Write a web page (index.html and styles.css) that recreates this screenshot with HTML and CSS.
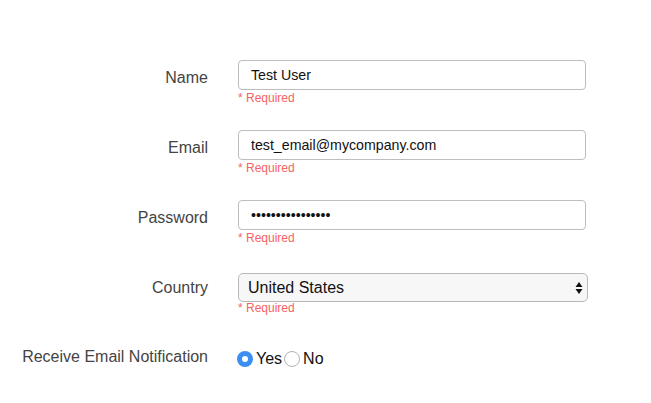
FILE: index.html
```html
<!DOCTYPE html>
<html>
<head>
<meta charset="utf-8">
<link rel="stylesheet" href="styles.css">
</head>
<body>
<form class="form">
  <div class="row">
    <label class="label">Name</label>
    <div class="control">
      <input class="input" type="text" value="Test User">
      <div class="req">* Required</div>
    </div>
  </div>
  <div class="row">
    <label class="label">Email</label>
    <div class="control">
      <input class="input" type="text" value="test_email@mycompany.com">
      <div class="req">* Required</div>
    </div>
  </div>
  <div class="row">
    <label class="label">Password</label>
    <div class="control">
      <input class="input" type="password" value="passwordpassword">
      <div class="req">* Required</div>
    </div>
  </div>
  <div class="row">
    <label class="label">Country</label>
    <div class="control">
      <div class="select">
        <span class="select-text">United States</span>
        <svg class="arrows" width="8" height="14" viewBox="0 0 8 14"><path d="M4 1 L7.5 6 L0.5 6 Z M4 13 L7.5 8 L0.5 8 Z" fill="#111"/></svg>
      </div>
      <div class="req">* Required</div>
    </div>
  </div>
  <div class="row row-radio">
    <label class="label">Receive Email Notification</label>
    <div class="control radios">
      <span class="radio on"></span><span class="rtext">Yes</span>
      <span class="radio"></span><span class="rtext">No</span>
    </div>
  </div>
</form>
</body>
</html>
```
FILE: styles.css
```css
html, body {
  margin: 0;
  padding: 0;
  background: #fff;
  font-family: "Liberation Sans", Arial, Helvetica, sans-serif;
}
.form {
  padding-top: 60px;
}
.row {
  display: grid;
  grid-template-columns: 208px 348px;
  column-gap: 30px;
  height: 70px;
}
.label {
  text-align: right;
  font-size: 16px;
  color: #444;
  line-height: 30px;
  height: 30px;
  padding-top: 3px;
}
.control {
  display: flex;
  flex-direction: column;
}
.input {
  box-sizing: border-box;
  width: 348px;
  height: 30px;
  margin: 0;
  border: 1px solid #bdbdbd;
  border-radius: 4px;
  padding: 0 12px;
  font-family: "Liberation Sans", Arial, sans-serif;
  font-size: 14.2px;
  color: #111;
  outline: none;
}
.req {
  font-size: 12px;
  color: #f76363;
  line-height: 14px;
  margin-top: 1px;
}
.select {
  box-sizing: border-box;
  width: 350px;
  height: 29px;
  margin-top: 3px;
  margin-bottom: -2px;
  border: 1px solid #b8b8b8;
  border-radius: 5px;
  background: #f7f7f7;
  display: flex;
  align-items: center;
  justify-content: space-between;
  padding: 0 4px 0 9px;
}
.select-text {
  font-size: 16px;
  color: #111;
}
.arrows {
  display: block;
}
.row-radio {
  height: 40px;
}
.row-radio .label {
  padding-top: 0;
  line-height: 34px;
}
.radios {
  flex-direction: row;
  align-items: center;
  height: 38px;
}
.radio {
  box-sizing: border-box;
  width: 16px;
  height: 16px;
  border-radius: 50%;
  border: 1px solid #b3b3b3;
  background: #fff;
  margin-left: -1px;
}
.radio.on {
  border: 5px solid #3b8ff2;
  background: #fff;
}
.rtext {
  font-size: 16px;
  color: #111;
  margin-left: 3px;
  margin-right: 3px;
}
```
